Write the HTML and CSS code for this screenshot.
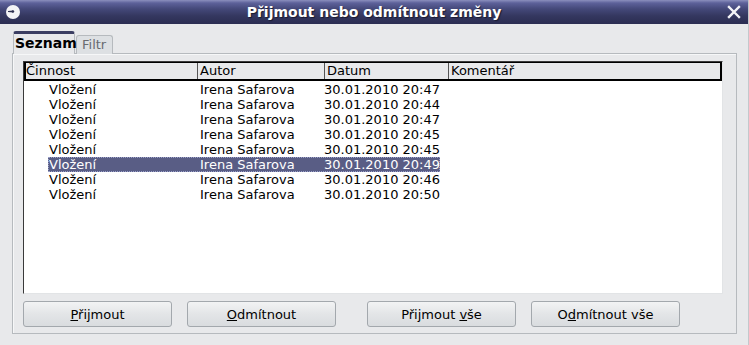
FILE: index.html
```html
<!DOCTYPE html>
<html lang="cs">
<head>
    <meta charset="UTF-8">
    <title>Přijmout nebo odmítnout změny</title>
    <link rel="stylesheet" href="styles.css">
</head>
<body>
    <div class="window">
        <div class="titlebar">
            <svg class="title-icon" width="16" height="16" viewBox="0 0 16 16">
                <circle cx="8" cy="8" r="7" fill="#f4f4f6"/>
                <path d="M3 7 L8 6.5 L8 8.5 L3 8 Z" fill="#2e3050"/>
                <circle cx="8" cy="7.5" r="1.2" fill="#2e3050"/>
            </svg>
            <div class="title">Přijmout nebo odmítnout změny</div>
            <svg class="close-icon" width="14" height="14" viewBox="0 0 14 14">
                <path d="M2 2 L12 12 M12 2 L2 12" stroke="#f4f4f8" stroke-width="2.4" stroke-linecap="square"/>
            </svg>
        </div>

        <div class="content">
            <div class="tabs">
                <div class="tab active">Seznam</div>
                <div class="tab">Filtr</div>
            </div>

            <div class="panel">
                <div class="listbox">
                    <div class="list-header">
                        <div class="col c1">Činnost</div>
                        <div class="col c2">Autor</div>
                        <div class="col c3">Datum</div>
                        <div class="col c4">Komentář</div>
                    </div>
                    <div class="rows">
                        <div class="row"><span class="cells"><span class="c1">Vložení</span><span class="c2">Irena Safarova</span><span class="c3">30.01.2010 20:47</span></span></div>
                        <div class="row"><span class="cells"><span class="c1">Vložení</span><span class="c2">Irena Safarova</span><span class="c3">30.01.2010 20:44</span></span></div>
                        <div class="row"><span class="cells"><span class="c1">Vložení</span><span class="c2">Irena Safarova</span><span class="c3">30.01.2010 20:47</span></span></div>
                        <div class="row"><span class="cells"><span class="c1">Vložení</span><span class="c2">Irena Safarova</span><span class="c3">30.01.2010 20:45</span></span></div>
                        <div class="row"><span class="cells"><span class="c1">Vložení</span><span class="c2">Irena Safarova</span><span class="c3">30.01.2010 20:45</span></span></div>
                        <div class="row selected"><span class="cells"><span class="c1">Vložení</span><span class="c2">Irena Safarova</span><span class="c3">30.01.2010 20:49</span></span></div>
                        <div class="row"><span class="cells"><span class="c1">Vložení</span><span class="c2">Irena Safarova</span><span class="c3">30.01.2010 20:46</span></span></div>
                        <div class="row"><span class="cells"><span class="c1">Vložení</span><span class="c2">Irena Safarova</span><span class="c3">30.01.2010 20:50</span></span></div>
                    </div>
                </div>

                <div class="buttons">
                    <button class="btn"><u>P</u>řijmout</button>
                    <button class="btn"><u>O</u>dmítnout</button>
                    <button class="btn gap">Přijmout <u>v</u>še</button>
                    <button class="btn">O<u>d</u>mítnout vše</button>
                </div>
            </div>
        </div>
    </div>
</body>
</html>
```

FILE: styles.css
```css
* {
    margin: 0;
    padding: 0;
    box-sizing: border-box;
}

body {
    font-family: 'DejaVu Sans', 'Liberation Sans', sans-serif;
    font-size: 13px;
    color: #000;
    background: #e8e9eb;
    width: 749px;
    height: 345px;
    overflow: hidden;
}

.window {
    width: 749px;
    height: 345px;
    background: #e8e9eb;
    border-right: 1px solid #c4c8cc;
}

.titlebar {
    height: 24px;
    display: flex;
    align-items: center;
    padding: 0 4px 0 4px;
    background: linear-gradient(#8b8fbd 0, #5d619a 3px, #444879 9px, #34375f 16px, #2b2d52 24px);
}

.title-icon {
    margin-left: 1px;
}

.title {
    flex: 1;
    text-align: center;
    color: #fff;
    font-weight: bold;
    font-size: 14px;
    text-shadow: 1px 1px 1px #1a1b30;
}

.close-icon {
    margin-right: 3px;
}

.content {
    padding: 7px 11px 0 12px;
}

.tabs {
    display: flex;
    align-items: flex-end;
    height: 22px;
    padding-left: 1px;
}

.tab {
    height: 19px;
    padding: 0 6px 0 5px;
    margin-left: 1px;
    color: #686b70;
    background: #dde0e3;
    border: 1px solid #b6babe;
    border-bottom: none;
    border-radius: 3px 3px 0 0;
    line-height: 18px;
    margin-bottom: -1px;
}

.tab.active {
    height: 23px;
    width: 62px;
    margin-left: 0;
    padding: 0 1px;
    color: #000;
    font-weight: bold;
    font-size: 14px;
    background: #e8e9eb;
    border: 1px solid #b6babe;
    border-top: 3px solid #3b3e62;
    border-bottom: none;
    line-height: 18px;
    position: relative;
    z-index: 1;
}

.panel {
    height: 281px;
    border: 1px solid #b6babe;
    box-shadow: inset 1px 1px 0 #f6f7f8;
    padding: 7px 13px 0 10px;
}

.listbox {
    height: 233px;
    background: #fff;
    border-left: 1px solid #3a3a3a;
    border-top: 1px solid #3a3a3a;
    border-right: 1px solid #e2e4e6;
    border-bottom: 1px solid #e2e4e6;
}

.list-header {
    display: flex;
    height: 19px;
    background: #e8e9eb;
    border: 2px solid #000;
    border-top-width: 1px;
    line-height: 16px;
}

.list-header .col {
    padding-left: 2px;
    border-right: 1px solid #555;
    white-space: nowrap;
}

.list-header .c1 {
    width: 172px;
    padding-left: 0;
}

.list-header .c2 {
    width: 127px;
}

.list-header .c3 {
    width: 124px;
}

.list-header .col:last-child {
    border-right: none;
    flex: 1;
}

.rows {
    padding-top: 1px;
}

.row {
    height: 15px;
    line-height: 15px;
    padding-left: 24px;
}

.cells {
    display: flex;
    width: 392px;
    white-space: nowrap;
}

.row .c1 {
    width: 151px;
    flex: none;
    padding-left: 1px;
}

.row .c2 {
    width: 124px;
    flex: none;
    padding-left: 1px;
}

.row .c3 {
    flex: 1;
    padding-left: 1px;
}

.row.selected .cells {
    background: #595d85;
    color: #fff;
    outline: 1px dotted #9aa0c8;
    outline-offset: -1px;
}

.buttons {
    display: flex;
    margin-top: 7px;
}

.btn {
    width: 149px;
    height: 26px;
    margin-right: 15px;
    font-family: 'DejaVu Sans', 'Liberation Sans', sans-serif;
    font-size: 13px;
    color: #000;
    background: linear-gradient(#f2f3f4, #e3e5e7 50%, #d9dcdf);
    border: 1px solid #a3a8ad;
    border-radius: 3px;
}

.btn.gap {
    margin-left: 16px;
}

.btn u {
    text-decoration: underline;
}
```
